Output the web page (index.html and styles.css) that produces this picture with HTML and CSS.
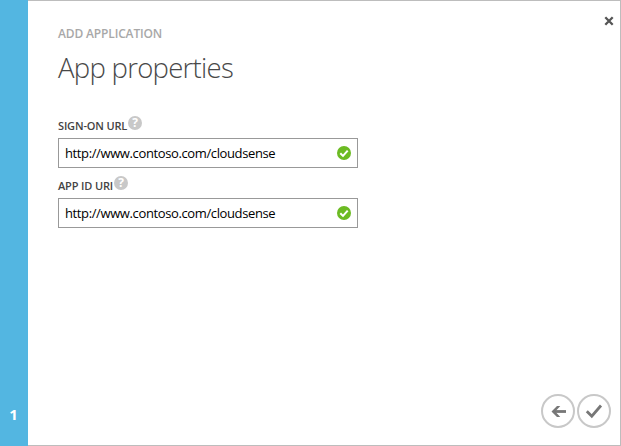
FILE: index.html
```html
<!DOCTYPE html>
<html lang="en">
<head>
<meta charset="utf-8">
<title>Add application</title>
<link rel="stylesheet" href="styles.css">
</head>
<body>
<div class="wizard">
  <aside class="steps"><span class="step">1</span></aside>
  <main class="panel">
    <button class="close" aria-label="Close"><svg width="10" height="10" viewBox="0 0 10 10"><path d="M1.3 1.3 8.7 8.7M8.7 1.3 1.3 8.7"/></svg></button>
    <p class="eyebrow"><span>ADD APPLICATION</span></p>
    <h1 class="title"><span>App properties</span></h1>
    <div class="field">
      <div class="label"><span class="label-text signon">SIGN-ON URL</span><span class="help">?</span></div>
      <div class="input"><span class="value">http://www.contoso.com/cloudsense</span><svg class="valid" width="14" height="14" viewBox="0 0 14 14"><circle cx="7" cy="7" r="7"/><path d="M3.3 7.2 6 9.9 10.7 4.6"/></svg></div>
    </div>
    <div class="field">
      <div class="label"><span class="label-text appid">APP ID URI</span><span class="help">?</span></div>
      <div class="input"><span class="value">http://www.contoso.com/cloudsense</span><svg class="valid" width="14" height="14" viewBox="0 0 14 14"><circle cx="7" cy="7" r="7"/><path d="M3.3 7.2 6 9.9 10.7 4.6"/></svg></div>
    </div>
    <div class="actions">
      <button class="round" aria-label="Back"><svg width="34" height="34" viewBox="0 0 34 34"><circle cx="17" cy="17" r="16"/><path d="M25 17.5H13"/><path class="head" d="M10.5 17.5 16 12H19.3L14.2 17.5 19.3 23H16Z"/></svg></button>
      <button class="round" aria-label="Complete"><svg width="34" height="34" viewBox="0 0 34 34"><circle cx="17" cy="17" r="16"/><path d="M9.8 17.2 14.8 22.2 24 11.5"/></svg></button>
    </div>
  </main>
</div>
</body>
</html>
```
FILE: styles.css
```css
* { box-sizing: border-box; }
body { margin: 0; background: #fff; font-family: "Open Sans", "Noto Sans", sans-serif; }
button { border: 0; padding: 0; background: none; display: block; }
svg { display: block; }
.wizard { display: flex; width: 621px; height: 446px; }
.steps { width: 28px; background: #53b6e1; display: flex; align-items: flex-end; justify-content: center; padding: 0 1px 23px 0; }
.step { color: #fff; font-size: 15px; line-height: 18px; font-weight: 700; }
.panel { position: relative; flex: 1; display: flex; flex-direction: column; border: 1px solid #bdbdbd; border-left: 0; padding: 24px 9px 17px 30px; }
.close { position: absolute; top: 15px; right: 6px; }
.close path { fill: none; stroke: #555; stroke-width: 2.3; }
.eyebrow { margin: 0; font-size: 12px; line-height: 18px; font-weight: 600; color: #a8a8a8; letter-spacing: -0.15px; white-space: nowrap; }
.title { margin: 7px 0 0; font-size: 27.5px; line-height: 36px; font-weight: 300; color: #484848; letter-spacing: -0.72px; white-space: nowrap; }
.field { width: 300px; height: 60px; }
.title + .field { margin-top: 29px; }
.label { display: flex; height: 23px; font-size: 11px; line-height: 16px; font-weight: 600; color: #444; white-space: nowrap; }
.label-text { padding-top: 3px; letter-spacing: -0.15px; }
.signon { width: 70px; }
.appid { width: 56px; }
.help { width: 14px; height: 14px; margin-top: 1px; border-radius: 50%; background: #c8c8c8; color: #fff; font-size: 12px; line-height: 14px; font-weight: 700; text-align: center; }
.input { display: flex; align-items: center; justify-content: space-between; height: 30px; border: 1px solid #999; padding: 0 6px; color: #000; font-size: 13px; white-space: nowrap; }
.value { letter-spacing: -0.38px; }
.valid circle { fill: #6cbb23; }
.valid path { fill: none; stroke: #fff; stroke-width: 2; }
.actions { display: flex; gap: 2px; margin-top: auto; align-self: flex-end; }
.round circle { fill: #fff; stroke: #c8c8c8; stroke-width: 2; }
.round path { fill: none; stroke: #777; stroke-width: 2.8; }
.round .head { fill: #777; stroke: none; }
```
